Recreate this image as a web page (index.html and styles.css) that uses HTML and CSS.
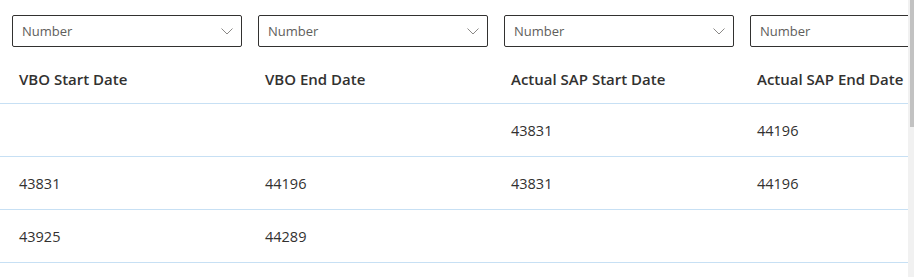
FILE: index.html
```html
<!DOCTYPE html>
<html lang="en">

<head>
    <meta charset="UTF-8">
    <meta name="viewport" content="width=device-width, initial-scale=1.0">
    <title>Dates grid</title>
    <link rel="stylesheet" href="styles.css">
</head>

<body>
    <div class="page">
        <div class="viewport">
            <!-- FILTERS -->
            <div class="filter-row">
                <div class="cell">
                    <div class="dropdown">
                        <span class="dropdown-text">Number</span>
                        <svg class="chevron" width="12" height="7" viewBox="0 0 12 7">
                            <path d="M0.5 0.5 L6 6 L11.5 0.5" />
                        </svg>
                    </div>
                </div>
                <div class="cell">
                    <div class="dropdown">
                        <span class="dropdown-text">Number</span>
                        <svg class="chevron" width="12" height="7" viewBox="0 0 12 7">
                            <path d="M0.5 0.5 L6 6 L11.5 0.5" />
                        </svg>
                    </div>
                </div>
                <div class="cell">
                    <div class="dropdown">
                        <span class="dropdown-text">Number</span>
                        <svg class="chevron" width="12" height="7" viewBox="0 0 12 7">
                            <path d="M0.5 0.5 L6 6 L11.5 0.5" />
                        </svg>
                    </div>
                </div>
                <div class="cell">
                    <div class="dropdown">
                        <span class="dropdown-text">Number</span>
                        <svg class="chevron" width="12" height="7" viewBox="0 0 12 7">
                            <path d="M0.5 0.5 L6 6 L11.5 0.5" />
                        </svg>
                    </div>
                </div>
            </div>

            <!-- HEADER -->
            <div class="row header-row">
                <div class="cell">VBO Start Date</div>
                <div class="cell">VBO End Date</div>
                <div class="cell">Actual SAP Start Date</div>
                <div class="cell">Actual SAP End Date</div>
            </div>

            <!-- ROWS -->
            <div class="row">
                <div class="cell"></div>
                <div class="cell"></div>
                <div class="cell">43831</div>
                <div class="cell">44196</div>
            </div>
            <div class="row">
                <div class="cell">43831</div>
                <div class="cell">44196</div>
                <div class="cell">43831</div>
                <div class="cell">44196</div>
            </div>
            <div class="row">
                <div class="cell">43925</div>
                <div class="cell">44289</div>
                <div class="cell"></div>
                <div class="cell"></div>
            </div>
        </div>
        <div class="scrollbar">
            <div class="scrollbar-thumb"></div>
        </div>
    </div>
</body>

</html>
```

FILE: styles.css
```css
* {
    box-sizing: border-box;
    margin: 0;
    padding: 0;
    font-family: 'Open Sans', 'Noto Sans', Arial, sans-serif;
}

body {
    background-color: #ffffff;
    color: #323130;
    width: 914px;
    height: 277px;
    overflow: hidden;
}

.page {
    display: flex;
    height: 277px;
}

.viewport {
    flex: 1;
    overflow: hidden;
}

/*FILTERS*/
.filter-row {
    display: flex;
    padding: 15px 0 0 12px;
    height: 47px;
}

.filter-row .cell {
    flex: 0 0 246px;
}

.dropdown {
    display: flex;
    align-items: center;
    justify-content: space-between;
    width: 230px;
    height: 32px;
    padding: 0 8px 0 9px;
    border: 1px solid #323130;
    border-radius: 2px;
}

.dropdown-text {
    font-size: 13px;
    line-height: 30px;
    color: #605e5c;
}

.chevron {
    fill: none;
    stroke: #8a8886;
    stroke-width: 1;
}

/*GRID*/
.row {
    display: flex;
    width: 908px;
    padding: 17px 0 15px 12px;
    border-bottom: 1px solid #c7e0f4;
    font-size: 14.5px;
    line-height: 20px;
    height: 53px;
}

.row .cell {
    flex: 0 0 246px;
    padding-left: 7px;
    white-space: nowrap;
}

.header-row {
    height: 57px;
    padding-top: 22px;
    font-size: 15px;
    font-weight: 600;
}

/*SCROLLBAR*/
.scrollbar {
    width: 6px;
    background-color: #f1f1f1;
    padding-left: 2px;
}

.scrollbar-thumb {
    height: 127px;
    background-color: #c2c2c2;
}
```
